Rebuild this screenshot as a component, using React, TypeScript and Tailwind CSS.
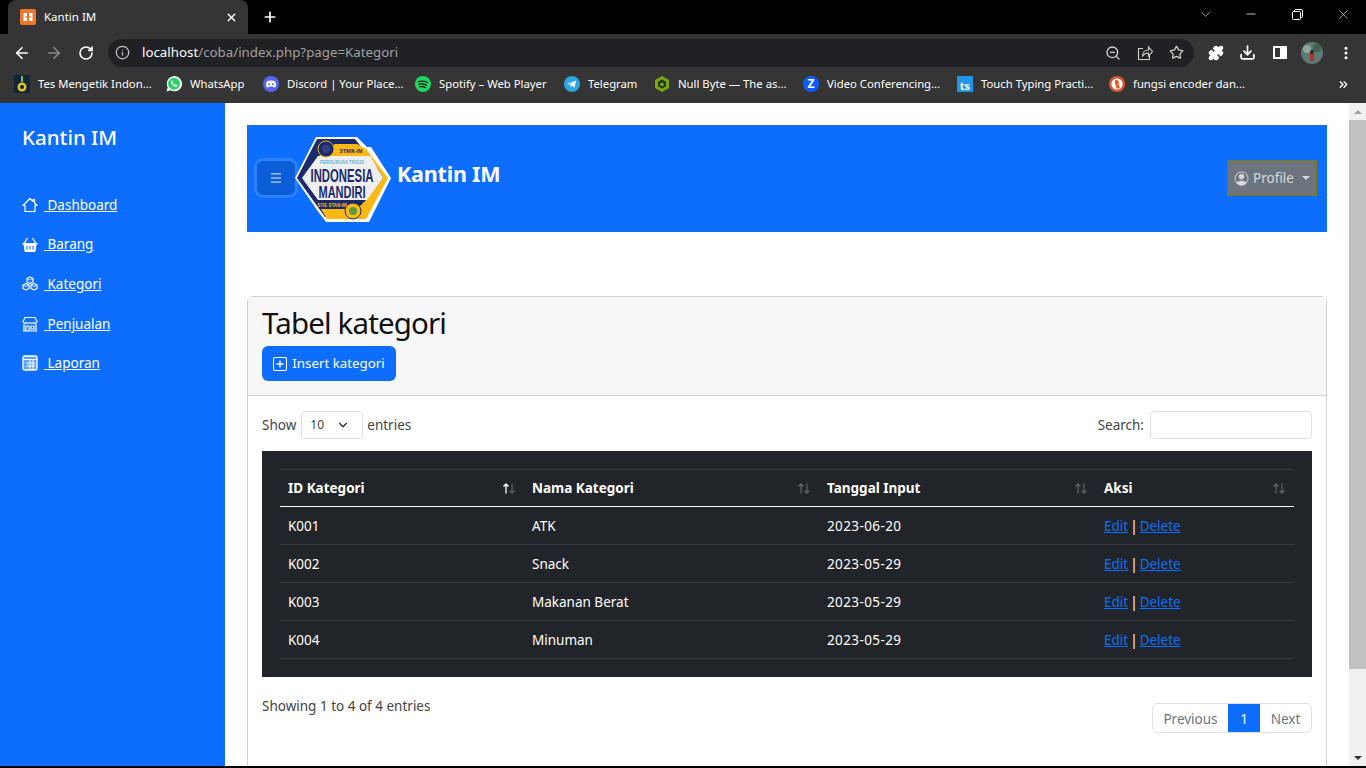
import {
  ArrowLeft,
  ArrowRight,
  RotateCw,
  Info,
  ZoomOut,
  Star,
  Download,
  Puzzle,
  X,
  Plus,
  Minus,
  ChevronDown,
  ChevronsRight,
  EllipsisVertical,
  Menu,
} from "lucide-react";

const uiFont = "font-['Noto_Sans','Open_Sans',sans-serif]";

function Favicon({ kind }: { kind: string }) {
  if (kind === "whatsapp")
    return (
      <svg width="18" height="18" viewBox="0 0 18 18" className="ml-[-1px]">
        <path d="M1.500 16.500l1.200-4.200A7.600 7.600 0 1 1 5.600 15.300z" fill="#fff" />
        <circle cx="9" cy="8.700" r="6" fill="#25d366" />
        <path d="M6.600 5.400c-1.200 1-.6 3 .9 4.600s3.500 2.400 4.600 1.300l.3-1-1.800-1-.8.7c-1-.4-2-1.400-2.400-2.400l.7-.8-.9-1.600z" fill="#fff" />
      </svg>
    );
  if (kind === "discord")
    return (
      <svg width="16" height="16" viewBox="0 0 16 16">
        <circle cx="8" cy="8" r="8" fill="#5865f2" />
        <path d="M4 5.300c2.500-1.200 5.500-1.200 8 0 .8 1.700 1.100 3.400 1 5.100-1 .7-1.800 1-2.500 1.100l-.6-.9H6.100l-.6.900c-.7-.1-1.500-.4-2.500-1.100-.1-1.700.2-3.400 1-5.100z" fill="#fff" />
        <circle cx="6.200" cy="8.300" r="1" fill="#5865f2" />
        <circle cx="9.800" cy="8.300" r="1" fill="#5865f2" />
      </svg>
    );
  if (kind === "spotify")
    return (
      <svg width="16" height="16" viewBox="0 0 16 16">
        <circle cx="8" cy="8" r="8" fill="#1ed760" />
        <path d="M3.500 5.600c3-.8 6.200-.5 9 .9M4 8.200c2.600-.6 5.200-.3 7.600 1M4.500 10.700c2-.4 4.200-.2 6 .8" stroke="#14171a" strokeWidth="1.300" fill="none" strokeLinecap="round" />
      </svg>
    );
  if (kind === "telegram")
    return (
      <svg width="16" height="16" viewBox="0 0 16 16">
        <circle cx="8" cy="8" r="8" fill="#2ca5e0" />
        <path d="M3.200 7.900l8.800-3.500-1.400 7.400-2.700-2-1.300 1.300-.3-2.300 4-3.300-5 2.900z" fill="#fff" />
      </svg>
    );
  if (kind === "nullbyte")
    return (
      <svg width="16" height="16" viewBox="0 0 16 16">
        <path d="M8 0l7 4v8l-7 4-7-4V4z" fill="#76a713" />
        <path d="M8 3.500l4 2.300v4.400l-4 2.300-4-2.300V5.800z" fill="#263014" />
        <path d="M5.500 9l2.500-3 2.500 3-2.500 1.500z" fill="#76a713" />
      </svg>
    );
  if (kind === "zoom")
    return (
      <div className="flex h-4 w-4 items-center justify-center rounded-full bg-[#0b5cff] text-[12px] leading-none font-bold text-white">
        Z
      </div>
    );
  if (kind === "ts")
    return (
      <div className="flex h-4 w-4 items-end justify-center bg-[#2196e8] text-[11px] leading-[12px] font-bold text-white">
        ts
      </div>
    );
  if (kind === "duck")
    return (
      <svg width="16" height="16" viewBox="0 0 16 16">
        <circle cx="8" cy="8" r="8" fill="#de5833" />
        <circle cx="8" cy="8" r="5.600" fill="#fff" />
        <path d="M6 4.500c2-1 4 0 4 2.500l.5 5.500H7.500C7.500 10 5 7 6 4.500z" fill="#de5833" />
        <path d="M7.500 8.200l3-.8v1.800z" fill="#f5c518" />
        <path d="M8.500 11l2-.8v1.800z" fill="#4caf50" />
      </svg>
    );
  return (
    <svg width="16" height="18" viewBox="0 0 16 18">
      <rect width="16" height="18" fill="#12263a" />
      <circle cx="8" cy="12" r="4.500" fill="#e6c229" />
      <circle cx="8" cy="12" r="2" fill="#12263a" />
      <path d="M7 1h2v6H7z" fill="#7fbf3f" />
    </svg>
  );
}

const bookmarks = [
  { kind: "tes", label: "Tes Mengetik Indon...", w: "w-[152px]" },
  { kind: "whatsapp", label: "WhatsApp", w: "w-[97px]" },
  { kind: "discord", label: "Discord | Your Place...", w: "w-[152px]" },
  { kind: "spotify", label: "Spotify – Web Player", w: "w-[149px]" },
  { kind: "telegram", label: "Telegram", w: "w-[90px]" },
  { kind: "nullbyte", label: "Null Byte — The as...", w: "w-[149px]" },
  { kind: "zoom", label: "Video Conferencing...", w: "w-[154px]" },
  { kind: "ts", label: "Touch Typing Practi...", w: "w-[152px]" },
  { kind: "duck", label: "fungsi encoder dan...", w: "w-[152px]" },
];

function BrowserChrome() {
  return (
    <div className={`shrink-0 ${uiFont}`}>
      <div className="flex h-[34px] bg-black pl-2">
        <div className="flex h-[34px] w-[240px] items-center rounded-t-lg bg-[#353535] pr-2.5 pl-3 text-[11.500px] text-white">
          <svg width="16" height="16" viewBox="0 0 16 16" className="shrink-0">
            <rect width="16" height="16" rx="2" fill="#f0772b" />
            <path d="M3.500 4h3.500v3.200H5.500V8.800H7V12H3.500zM12.500 4H9v3.200h1.500V8.800H9V12h3.500z" fill="#fff" />
          </svg>
          <span className="ml-2 flex-1">Kantin IM</span>
          <X size={13} strokeWidth={2.5} />
        </div>
        <div className="flex h-[34px] w-[44px] items-center justify-center text-white">
          <Plus size={16} strokeWidth={2.5} />
        </div>
        <div className="flex-1" />
        <div className="flex h-[34px] items-start pt-[7px] text-white">
          <div className="flex w-[46px] justify-center">
            <ChevronDown size={15} strokeWidth={1} />
          </div>
          <div className="flex w-[46px] justify-center">
            <Minus size={14} strokeWidth={1.3} />
          </div>
          <div className="flex w-[46px] justify-center pt-0.5">
            <svg width="11" height="11" viewBox="0 0 11 11" fill="none" stroke="#fff">
              <rect x="0.500" y="2.500" width="8" height="8" rx="1" />
              <path d="M2.500 2.500V1.500a1 1 0 0 1 1-1h6a1 1 0 0 1 1 1v6a1 1 0 0 1-1 1H8.500" />
            </svg>
          </div>
          <div className="flex w-[46px] justify-center">
            <X size={15} strokeWidth={1} />
          </div>
        </div>
      </div>

      <div className="flex h-[35px] items-center bg-[#353535] pt-[2px] pl-[13px] text-white">
        <ArrowLeft size={18} strokeWidth={2.2} />
        <ArrowRight size={18} strokeWidth={2.2} className="ml-[14px] text-[#8a8a8a]" />
        <RotateCw size={16} strokeWidth={2.4} className="ml-[15px]" />
        <div className="ml-[14px] flex h-[28px] w-[1086px] items-center rounded-full bg-[#202124] pr-[10px] pl-[7px]">
          <Info size={15} className="text-[#c4c4c4]" />
          <span className="ml-[12px] flex-1 text-[13.300px] text-[#a0a0a0]">
            <span className="text-white">localhost</span>/coba/index.php?page=Kategori
          </span>
          <ZoomOut size={16} className="text-[#d0d0d0]" />
          <svg width="16" height="16" viewBox="0 0 16 16" fill="none" stroke="#d0d0d0" strokeWidth="1.100" className="ml-[16px]">
            <path d="M6 3.500H1.500v11h11V10" />
            <path d="M5.500 11c0-3.500 2.500-6 6-6V2l4 4.500-4 4.500V8c-2.500 0-4.500 1-6 3z" />
          </svg>
          <Star size={15} className="ml-[16px] text-[#d0d0d0]" />
        </div>
        <Puzzle size={16} fill="#fff" className="ml-[14px]" />
        <Download size={17} strokeWidth={2.4} className="ml-[15px]" />
        <div className="ml-[17px] flex h-[13px] w-[14px] justify-end border-2 border-white">
          <div className="w-[5px] bg-white" />
        </div>
        <svg width="22" height="22" viewBox="0 0 22 22" className="ml-[14px]">
          <circle cx="11" cy="11" r="11" fill="#5d7a70" />
          <circle cx="6" cy="7" r="4" fill="#8fa89a" />
          <circle cx="16" cy="6" r="4" fill="#46604f" />
          <rect x="9" y="11" width="4" height="8" fill="#a8323a" />
          <circle cx="11" cy="10" r="2" fill="#2c2c2c" />
        </svg>
        <EllipsisVertical size={16} strokeWidth={2.6} className="ml-[15px]" />
      </div>

      <div className="flex h-[34px] items-center bg-[#353535] pb-[4px] pl-[14px] text-[11.300px] text-white">
        {bookmarks.map((b) => (
          <div key={b.label} className={`flex shrink-0 items-center ${b.w}`}>
            <span className="flex w-[24px] shrink-0 items-center">
              <Favicon kind={b.kind} />
            </span>
            <span className="whitespace-nowrap">{b.label}</span>
          </div>
        ))}
        <ChevronsRight size={13} strokeWidth={2.5} className="ml-[76px]" />
      </div>
    </div>
  );
}

function Icon({ name }: { name: string }) {
  if (name === "Dashboard")
    return (
      <svg width="16" height="16" viewBox="0 0 16 16" fill="none" stroke="#fff" strokeWidth="1.200" strokeLinejoin="round">
        <path d="M8 1.500L1 8.500h2V14.500h10V8.500h2L12.500 6V2.500h-1.500V4.500z" />
      </svg>
    );
  if (name === "Barang")
    return (
      <svg width="16" height="16" viewBox="0 0 16 16">
        <path d="M2 6.500L5.200 1.500M14 6.500L10.800 1.500" stroke="#fff" strokeWidth="1.300" strokeLinecap="round" />
        <path d="M0.500 6h15v1.500h-1l-1 6.500a1 1 0 0 1-1 1h-9a1 1 0 0 1-1-1l-1-6.500h-1z" fill="#fff" />
        <path d="M5 9v3.500M8 9v3.500M11 9v3.500" stroke="#0d6efd" strokeWidth="1.100" />
      </svg>
    );
  if (name === "Kategori")
    return (
      <svg width="16" height="16" viewBox="0 0 16 16" fill="none" stroke="#fff" strokeWidth="1.200" strokeLinejoin="round">
        <path d="M8 1l3 1.500v3.500L8 7.500 5 6V2.500z" />
        <path d="M4 7.500l3 1.500v3.500L4 14l-3-1.500V9z" />
        <path d="M12 7.500l3 1.500v3.500L12 14l-3-1.500V9z" />
        <path d="M5 2.500l3 1.500 3-1.500M1 9l3 1.500L7 9M9 9l3 1.500L15 9" strokeWidth="0.800" />
      </svg>
    );
  if (name === "Penjualan")
    return (
      <svg width="16" height="16" viewBox="0 0 16 16" fill="none" stroke="#fff" strokeWidth="1.200">
        <path d="M3 1.500h10l2 4a2 2 0 0 1-3.500 1 2.200 2.200 0 0 1-3.500 0 2.200 2.200 0 0 1-3.500 0A2 2 0 0 1 1 5.500z" />
        <path d="M2 8v7h12V8M1 15h14M4 15v-5h3v5M9 10h3v3H9z" />
      </svg>
    );
  return (
    <svg width="16" height="16" viewBox="0 0 16 16" fill="none" stroke="#fff" strokeWidth="1">
      <rect x="1" y="1" width="14" height="14" rx="1.500" fill="#fff" fillOpacity="0.350" strokeWidth="1.300" />
      <path d="M1 4.500h14M4 8h9M4 11h9M8 5v9M11 5v9" />
    </svg>
  );
}

function Sidebar() {
  const items = ["Dashboard", "Barang", "Kategori", "Penjualan", "Laporan"];
  return (
    <aside className="w-[225px] shrink-0 bg-[#0d6efd] pt-[20px] pl-[22px] text-white">
      <div className="h-[30px] text-[20.500px] leading-[28px] font-medium">Kantin IM</div>
      <ul className="mt-[40px] flex flex-col gap-[15.600px]">
        {items.map((name) => (
          <li key={name} className="flex h-6 items-center text-[13.500px]">
            <Icon name={name} />
            <a href="#" className="ml-[6px] whitespace-pre underline">
              {" "}
              {name}
            </a>
          </li>
        ))}
      </ul>
    </aside>
  );
}

function Logo() {
  const font = "'Liberation Sans',sans-serif";
  return (
    <svg width="96" height="85" viewBox="0 0 96 85" className="shrink-0">
      <path d="M21 0H62L72 10H76L96 41 74 85H31L22 73 0 41z" fill="#fff" />
      <path d="M22 2H60L74 20 90 41 72 80H30L2 41z" fill="#1b2a6b" />
      <path d="M40 7H62L71 12 93 41 71 82H32L26 72H62L72 62 88 41 75 19H24z" fill="#fdb913" />
      <path d="M23 19H75L88 41 72 63H23L7 41z" fill="#efefef" />
      <path d="M23 63H50V72H28z" fill="#1b2a6b" />
      <circle cx="31" cy="12" r="8" fill="#1b2a6b" stroke="#e4b020" />
      <circle cx="31" cy="12" r="4" fill="#33407e" />
      <circle cx="58" cy="74" r="8" fill="#fdb913" stroke="#1b2a6b" />
      <circle cx="58" cy="74" r="4" fill="#5c9a3a" />
      <text x="56" y="16" fontSize="5" fontWeight="700" fill="#1b2a6b" textAnchor="middle" fontFamily={font}>STMIK-IM</text>
      <text x="47" y="27" fontSize="5.500" fill="#1a9dd9" textAnchor="middle" textLength="44" lengthAdjust="spacingAndGlyphs" fontFamily={font}>PERGURUAN TINGGI</text>
      <text x="47" y="45" fontSize="19" fontWeight="700" fill="#1b2a6b" textAnchor="middle" textLength="63" lengthAdjust="spacingAndGlyphs" fontFamily={font}>INDONESIA</text>
      <text x="47" y="61" fontSize="17" fontWeight="700" fill="#1b2a6b" textAnchor="middle" textLength="47" lengthAdjust="spacingAndGlyphs" fontFamily={font}>MANDIRI</text>
      <text x="37" y="70" fontSize="4.500" fontWeight="700" fill="#fdb913" textAnchor="middle" fontFamily={font}>STIE STAN-IM</text>
    </svg>
  );
}

function Navbar() {
  return (
    <nav className="flex h-[107px] items-center bg-[#0d6efd] pr-[10px] pl-[10px]">
      <button className="mb-[1px] flex h-[34px] w-[38px] shrink-0 items-center justify-center rounded-md bg-[#0b5ed7] text-white shadow-[0_0_0_3px_#2d80fd]">
        <Menu size={14} strokeWidth={1.6} />
      </button>
      <div className="mt-[1px]">
        <Logo />
      </div>
      <span className="mb-[9px] ml-[6px] flex-1 text-[21.500px] font-bold tracking-[-0.200px] text-white">Kantin IM</span>
      <button className="mb-[1px] flex h-[36px] w-[90px] items-center justify-center gap-[4px] border border-[#7a7a10] bg-[#6c757d] text-[13.500px] text-[#d6d8db]">
        <svg width="15" height="15" viewBox="0 0 16 16" fill="none" stroke="#d6d8db" strokeWidth="1">
          <circle cx="8" cy="8" r="7" />
          <circle cx="8" cy="6" r="2.600" fill="#d6d8db" />
          <path d="M3 13c1-3 9-3 10 0a7 7 0 0 1-10 0z" fill="#d6d8db" />
        </svg>
        Profile
        <span className="ml-[4px] h-0 w-0 border-x-[4px] border-t-[4px] border-x-transparent border-t-[#d6d8db]" />
      </button>
    </nav>
  );
}

const rows = [
  ["K001", "ATK", "2023-06-20"],
  ["K002", "Snack", "2023-05-29"],
  ["K003", "Makanan Berat", "2023-05-29"],
  ["K004", "Minuman", "2023-05-29"],
];

function SortArrows({ active }: { active?: boolean }) {
  return (
    <svg width="14" height="11" viewBox="0 0 14 11" fill="none" strokeWidth="1.300" className="shrink-0">
      <path d="M4 10.500V1M1.500 3.500L4 1l2.500 2.500" stroke={active ? "#fff" : "#5c6166"} />
      <path d="M10 0.500V10M7.500 7.500L10 10l2.500-2.500" stroke="#5c6166" />
    </svg>
  );
}

function CardSection() {
  const heads = ["ID Kategori", "Nama Kategori", "Tanggal Input", "Aksi"];
  const widths = ["w-[244px]", "w-[295px]", "w-[277px]", "w-[198px]"];
  return (
    <section className="mt-[64px] rounded-t-md border border-b-0 border-[#cfcfcf] text-[#212529]">
      <header className="h-[99px] border-b border-[#cfcfcf] bg-[#f7f7f7] px-[14px] pt-[7px]">
        <h1 className="text-[29.500px] leading-[38px] font-normal tracking-[-0.850px] text-[#111]">Tabel kategori</h1>
        <button className="mt-[4px] flex h-[35px] w-[134px] items-center justify-center gap-[5px] rounded-md bg-[#0d6efd] pt-[1px] text-[13.300px] text-white">
          <svg width="14" height="14" viewBox="0 0 14 14" fill="none" stroke="#fff" strokeWidth="1.100">
            <rect x="0.500" y="0.500" width="13" height="13" rx="1.500" />
            <path d="M7 3.500v7M3.500 7h7" strokeWidth="1.300" />
          </svg>
          Insert kategori
        </button>
      </header>
      <div className="h-[371px] px-[14px] pt-[15px]">
        <div className="flex h-[28px] items-center justify-between text-[13.500px] text-[#444]">
          <div className="flex items-center">
            Show
            <div className="mr-[4px] ml-[5px] flex h-[28px] w-[62px] items-center justify-between rounded border border-[#dee2e6] pr-[12px] pl-[8px] text-[12px]">
              10
              <ChevronDown size={14} strokeWidth={2} className="text-[#212529]" />
            </div>
            entries
          </div>
          <div className="flex items-center">
            Search:
            <div className="ml-[6px] h-[28px] w-[162px] rounded border border-[#dee2e6] bg-white" />
          </div>
        </div>

        <div className="mt-[12px] h-[226px] bg-[#212529] px-[18px] pt-[18px] text-[14px] text-white">
          <table className="w-[1014px] table-fixed border-collapse">
            <thead>
              <tr className="h-[37px] border-t border-b border-t-[#373b3e] border-b-white">
                {heads.map((h, i) => (
                  <th key={h} className={`${widths[i]} px-2 pt-[1px] text-left text-[13.500px] font-bold`}>
                    <div className="flex items-center justify-between">
                      {h}
                      <SortArrows active={i === 0} />
                    </div>
                  </th>
                ))}
              </tr>
            </thead>
            <tbody>
              {rows.map((r) => (
                <tr key={r[0]} className="h-[38px] border-b border-[#373b3e] text-[13.500px]">
                  <td className="px-2 pt-[2px]">{r[0]}</td>
                  <td className="px-2 pt-[2px]">{r[1]}</td>
                  <td className="px-2 pt-[2px] tracking-[0.400px]">{r[2]}</td>
                  <td className="px-2 pt-[2px]">
                    <a href="#" className="text-[#0d6efd] underline">Edit</a>
                    <span className="mx-[2px]">|</span>
                    <a href="#" className="text-[#0d6efd] underline">Delete</a>
                  </td>
                </tr>
              ))}
            </tbody>
          </table>
        </div>

        <div className="flex items-start justify-between pt-[18px] text-[13.500px] text-[#444]">
          <span className="leading-[22px]">Showing 1 to 4 of 4 entries</span>
          <div className="mt-[8px] flex h-[30px] overflow-hidden rounded-md border border-[#dee2e6] text-[#6c757d]">
            <span className="flex w-[75px] items-center justify-center pt-[2px]">Previous</span>
            <span className="flex w-[32px] items-center justify-center bg-[#0d6efd] pt-[2px] text-white">1</span>
            <span className="flex w-[51px] items-center justify-center pt-[2px]">Next</span>
          </div>
        </div>
      </div>
    </section>
  );
}

function Scrollbar() {
  return (
    <div className="flex w-[17px] shrink-0 flex-col bg-[#f1f1f1]">
      <div className="flex h-[17px] items-center justify-center">
        <span className="h-0 w-0 border-x-[4px] border-b-[4px] border-x-transparent border-b-[#a3a3a3]" />
      </div>
      <div className="h-[549px] bg-[#c1c1c1]" />
      <div className="flex-1" />
      <div className="flex h-[17px] items-center justify-center">
        <span className="h-0 w-0 border-x-[4px] border-t-[4px] border-x-transparent border-t-[#333]" />
      </div>
    </div>
  );
}

export default function App() {
  return (
    <div className="flex h-[768px] w-[1366px] flex-col overflow-hidden bg-black">
      <BrowserChrome />
      <div className={`flex h-[663px] shrink-0 overflow-hidden bg-white ${uiFont}`}>
        <Sidebar />
        <main className="flex-1 pt-[22px] pr-[22px] pl-[22px]">
          <Navbar />
          <CardSection />
        </main>
        <Scrollbar />
      </div>
    </div>
  );
}
